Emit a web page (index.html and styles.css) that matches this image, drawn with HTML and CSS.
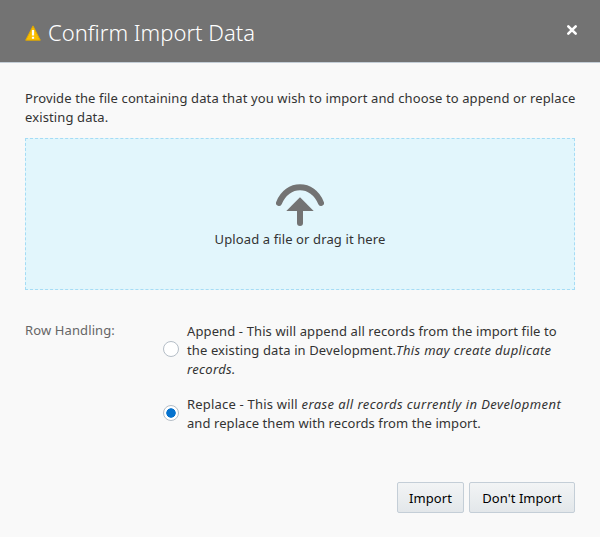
FILE: index.html
```html
<!DOCTYPE html>
<html lang="en">
<head>
<meta charset="utf-8">
<title>Confirm Import Data</title>
<link rel="stylesheet" href="styles.css">
</head>
<body>
<div class="dialog">
  <header class="header">
    <svg class="warning" width="16" height="16" viewBox="0 0 16 16">
      <path d="M8 .9 15.3 15.2H.7z" fill="#fbbf00" stroke="#e0a800" stroke-width="1" stroke-linejoin="round"/>
      <path d="M6.9 5h2.2v5.5H6.9zM6.9 11.8h2.2v2H6.9z" fill="#fff"/>
    </svg>
    <h1 class="title">Confirm Import Data</h1>
    <button class="close" aria-label="Close">
      <svg width="12" height="12" viewBox="0 0 12 12"><path d="M2.3 2.3 9.7 9.7M9.7 2.3 2.3 9.7" stroke="#fff" stroke-width="2.6" stroke-linecap="round"/></svg>
    </button>
  </header>
  <main class="body">
    <p class="intro">Provide the file containing data that you wish to import and choose to append or replace<br>existing data.</p>
    <div class="dropzone">
      <svg width="48" height="43" viewBox="0 0 48 43">
        <path d="M3 19C11-2 37-2 45 19" fill="none" stroke="#737373" stroke-width="6" stroke-linecap="round"/>
        <path d="M24 13.3 37.7 27H10.3z" fill="#737373"/>
        <path d="M24 25v14" stroke="#737373" stroke-width="6" stroke-linecap="round"/>
      </svg>
      <span class="drop-label">Upload a file or drag it here</span>
    </div>
    <div class="rows">
      <span class="label">Row Handling:</span>
      <div class="options">
        <label class="option append"><span class="radio"></span><span class="text">Append - This will append all records from the import file to<br>the existing data in Development.<em>This may create duplicate<br>records.</em></span></label>
        <label class="option replace"><span class="radio checked"></span><span class="text"><span class="lead">Replace - This will </span><em>erase all records currently in Development</em><br>and replace them with records from the import.</span></label>
      </div>
    </div>
    <footer class="actions">
      <button class="button import">Import</button>
      <button class="button cancel">Don't Import</button>
    </footer>
  </main>
</div>
</body>
</html>
```
FILE: styles.css
```css
* { box-sizing: border-box; }
body { margin: 0; background: #f9f9f9; color: #333; font: 13px/19px "Noto Sans", sans-serif; letter-spacing: .115px; }
.dialog { width: 600px; height: 537px; overflow: hidden; background: #f9f9f9; }
.header { display: flex; align-items: center; height: 63px; padding: 3px 22px 0 25px; background: #737373; border-bottom: 1px solid #c4ced7; }
.warning { margin-right: 7px; flex: none; }
.title { margin: -2px 0 0; color: #fff; font-size: 22px; font-weight: 300; line-height: 30px; letter-spacing: 0; white-space: nowrap; }
.close { display: flex; margin: -5px 0 0 auto; padding: 0; border: 0; background: none; }
.body { padding: 26px 25px 0; white-space: nowrap; }
.intro { margin: 0 0 11px; height: 38px; }
.dropzone { display: flex; flex-direction: column; align-items: center; height: 152px; padding-top: 45px; background: #e2f6fc; border: 1px dashed #a5dcf5; }
.dropzone svg { flex: none; margin-bottom: 3px; }
.rows { display: flex; padding-top: 31px; }
.label { width: 138px; color: #666; }
.options { padding-top: 1px; }
.option { display: flex; align-items: center; gap: 8px; }
.append { margin-bottom: 16px; }
.append em { letter-spacing: .34px; }
.replace { letter-spacing: .07px; }
.lead { letter-spacing: .2px; }
.replace em { letter-spacing: .42px; }
.radio { width: 16px; height: 16px; flex: none; border: 1px solid #b5bec7; border-radius: 50%; background: #fff; margin-top: -2px; }
.append .radio { margin-top: -3px; }
.checked { background: radial-gradient(circle, #0572ce 4.4px, #fff 5px); }
.actions { display: flex; justify-content: flex-end; gap: 5px; padding-top: 49px; }
.button { height: 31px; padding: 1px 0 0; border: 1px solid #c4ced7; border-radius: 2px; background: linear-gradient(#f2f4f5, #e3e7ea); color: #000; font: 13px/19px "Noto Sans", sans-serif; letter-spacing: .05px; }
.import { width: 67px; }
.cancel { width: 106px; }
```
